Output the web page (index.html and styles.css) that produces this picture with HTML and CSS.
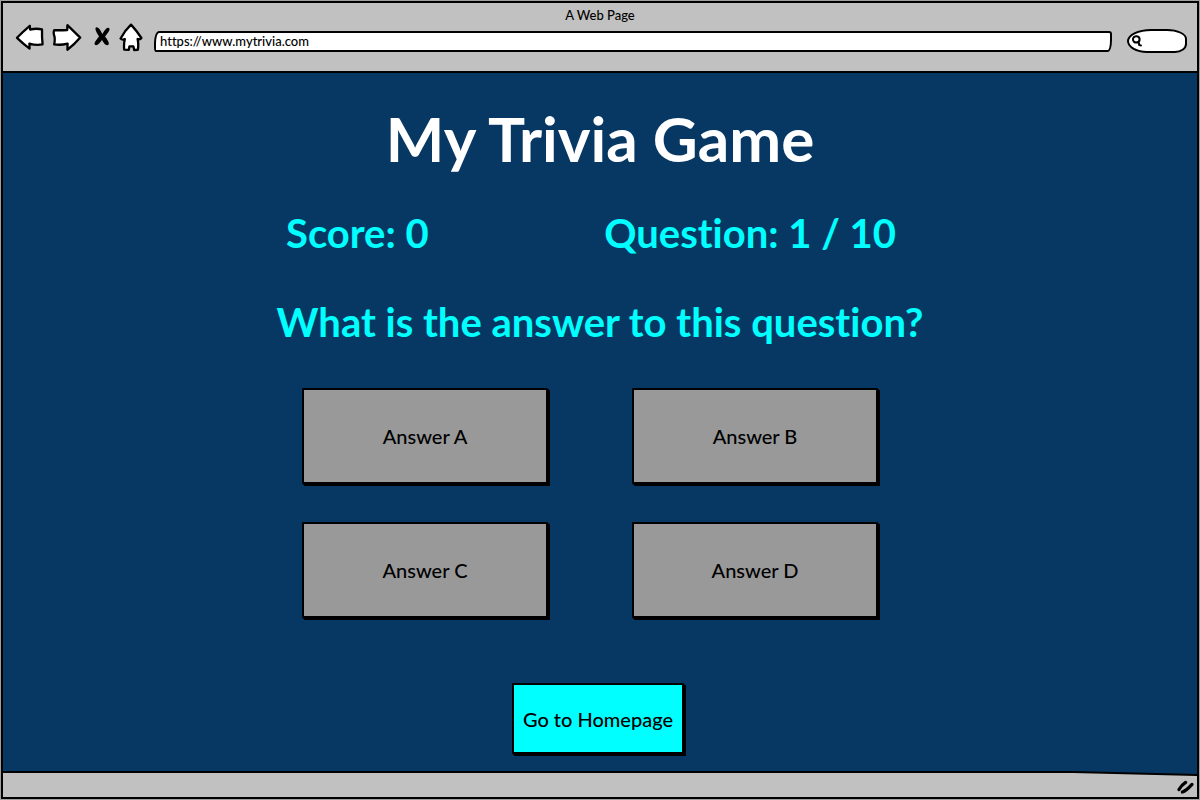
FILE: index.html
```html
<!DOCTYPE html>
<html lang="en">
<head>
<meta charset="utf-8">
<title>My Trivia Game</title>
<link rel="stylesheet" href="styles.css">
</head>
<body>
<div class="browser">
  <header class="chrome">
    <div class="chrome-title">A Web Page</div>
    <div class="toolbar">
      <nav class="nav">
        <button class="nav-button" type="button" aria-label="Back">
          <svg width="30" height="30" viewBox="0 0 30 30"><path class="outline" d="M2 14.8 Q8 8.5 14.8 2.8 L15.2 6.6 Q21 5 27 6.4 Q26.8 14 27.6 21.4 Q21 22.6 14.4 20.6 L14.6 25.6 Q8 20.6 2 14.8Z"/></svg>
        </button>
        <button class="nav-button nav-forward" type="button" aria-label="Forward">
          <svg width="30" height="30" viewBox="0 0 30 30"><path class="outline" d="M28.2 14.6 L15.4 2.2 L15.2 7 Q8 7.4 2.2 7.2 Q1 9.6 2.6 14 Q3 18 2.2 21.4 Q9 22.4 15.6 20.6 L15.4 26.8 Q22 22 28.2 14.6Z"/></svg>
        </button>
        <button class="nav-button nav-stop" type="button" aria-label="Stop">
          <svg width="18" height="30" viewBox="0 0 18 30"><path d="M3.4 4.2 C6.4 4.4 8 8.4 9.4 11 C11 8 13.6 4 15.7 4.8 C18.4 6.4 14.2 10.5 12 13.6 C13.8 16 17 20 15.4 21.8 C13.2 23.6 10.4 19.6 9 17 C7 20 4 23.2 2 21.8 C.2 20 4 16 6 13.4 C4 10.4 .8 5 3.4 4.2Z"/></svg>
        </button>
        <button class="nav-button nav-home" type="button" aria-label="Home">
          <svg width="24" height="30" viewBox="0 0 24 30"><path class="outline" d="M12 1.6 Q17.6 7.6 22.4 15 Q21.4 16.8 18.6 16 Q19.8 21.5 18.8 26.8 L15.2 27 L14.4 23.4 H10.4 L9.8 26.8 L5.2 26.6 Q4.6 21 5.8 16.2 Q3 17.2 1.6 15.6 Q5.6 7.6 12 1.6Z"/></svg>
        </button>
      </nav>
      <input class="address" type="text" aria-label="Address" value="https://www.mytrivia.com">
      <label class="search">
        <svg width="12" height="14" viewBox="0 0 12 14"><path class="lens" d="M2 5.5 C1.6 1.6 8 .8 8.6 5 C8.8 9.6 2.2 9.8 2 5.5Z M7.6 7.6 L8.2 11 L10 11.4"/></svg>
        <input class="search-field" type="text" aria-label="Search">
      </label>
    </div>
  </header>

  <main class="game">
    <h1 class="game-title">My Trivia Game</h1>
    <div class="status">
      <p class="status-item">Score: 0</p>
      <p class="status-item">Question: 1 / 10</p>
    </div>
    <h2 class="question">What is the answer to this question?</h2>
    <div class="answers">
      <button class="card-button" type="button">Answer A</button>
      <button class="card-button" type="button">Answer B</button>
      <button class="card-button" type="button">Answer C</button>
      <button class="card-button" type="button">Answer D</button>
    </div>
    <button class="card-button home-button" type="button">Go to Homepage</button>
  </main>

  <footer class="statusbar">
    <svg class="statusbar-edge" viewBox="0 0 1194 5" preserveAspectRatio="none"><path class="sea" d="M0 0 H1194 V4 L1070 1 H0Z"/><path class="edge" d="M0 1 H1070 L1194 4"/></svg>
    <svg class="grip" width="18" height="15" viewBox="0 0 18 15"><path class="grip-line" d="M2 10.5 Q4.6 6 8.6 3.4 M5.4 13 Q9 12 15 5.4"/></svg>
  </footer>
</div>
</body>
</html>
```
FILE: styles.css
```css
* {
  box-sizing: border-box;
}

body {
  display: flex;
  min-height: 100vh;
  margin: 0;
  padding: 1px;
  background: #a0a09c;
  font-family: Lato, "Open Sans", sans-serif;
  font-variant-ligatures: none;
  color: #000;
}

button,
input {
  font: inherit;
  color: inherit;
}

.browser {
  display: flex;
  flex: 1;
  flex-direction: column;
  min-width: 0;
  border: 2px solid #000;
  background: #073763;
}

.chrome {
  height: 70px;
  border-bottom: 2px solid #000;
  background: #c1c1c1;
}

.chrome-title {
  height: 24px;
  font-size: 13px;
  font-weight: 500;
  line-height: 24px;
  text-align: center;
}

.toolbar {
  display: flex;
  align-items: center;
  height: 28px;
  padding: 0 10px 0 12px;
}

.nav {
  display: flex;
  margin-top: -6px;
}

.nav-button {
  display: block;
  padding: 0;
  border: 0;
  background: none;
}

.nav-button svg {
  display: block;
}

.nav-forward {
  margin-left: 7px;
}

.nav-stop {
  margin-left: 11px;
}

.nav-home {
  margin-left: 8px;
}

.outline {
  fill: #fff;
  stroke: #000;
  stroke-width: 2.3;
  stroke-linejoin: round;
}

.address {
  flex: 1;
  min-width: 0;
  height: 21px;
  margin: 0 15px 0 11px;
  padding: 0 4px;
  border: 2px solid #000;
  border-radius: 5px 3px 4px 2px / 12px 3px 12px 5px;
  background: #fff;
  font-size: 13px;
  font-weight: 500;
}

.search {
  display: flex;
  align-items: center;
  width: 60px;
  height: 24px;
  padding-left: 2px;
  border: 2px solid #000;
  border-radius: 24px 20px 12px 20px / 12px 10px 9px 12px;
  background: #fff;
}

.search svg {
  flex: none;
}

.search-field {
  width: 36px;
  padding: 0;
  border: 0;
  background: none;
  font-size: 12px;
}

.lens {
  fill: none;
  stroke: #000;
  stroke-width: 2;
  stroke-linecap: round;
}

.game {
  display: flex;
  flex: 1;
  flex-direction: column;
  align-items: center;
  padding: 25px 16px 16px;
}

.game-title {
  margin: 0;
  color: #fff;
  font-size: 62px;
  font-weight: 700;
  line-height: 80px;
}

.status {
  display: flex;
  justify-content: space-between;
  width: 100%;
  max-width: 610px;
  margin: 31px 18px 0 0;
}

.status-item,
.question {
  margin: 0;
  color: #0ff;
  font-size: 40px;
  font-weight: 700;
  line-height: 48px;
}

.question {
  margin-top: 41px;
}

.answers {
  display: grid;
  grid-template-columns: repeat(2, 246px);
  grid-auto-rows: 96px;
  gap: 38px 84px;
  margin: 42px 20px 0 0;
}

.card-button {
  padding: 0;
  border: 2px solid #000;
  border-radius: 1px;
  background: #999;
  box-shadow: 1px 1px 0 #000, 2px 2px 0 #000;
  font-size: 20px;
  font-weight: 500;
}

.home-button {
  width: 172px;
  height: 71px;
  margin: 65px 4px 0 0;
  background: #0ff;
}

.statusbar {
  display: flex;
  flex-direction: column;
  align-items: flex-end;
  height: 26px;
  background: #c1c1c1;
}

.statusbar-edge {
  display: block;
  width: 100%;
  height: 5px;
}

.sea {
  fill: #073763;
}

.edge {
  fill: none;
  stroke: #000;
  stroke-width: 2;
}

.grip {
  margin: 3px 2px 0 0;
}

.grip-line {
  fill: none;
  stroke: #000;
  stroke-width: 3.2;
  stroke-linecap: round;
}
```
